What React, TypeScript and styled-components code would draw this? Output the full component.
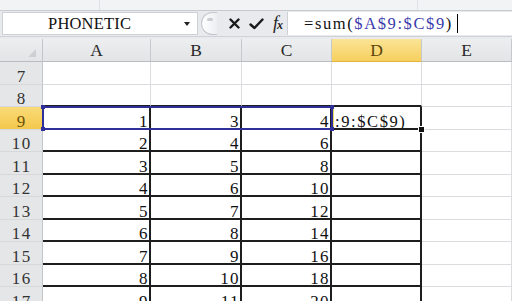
import React from 'react';
import styled, { createGlobalStyle, css } from 'styled-components';

const Global = createGlobalStyle`
  html, body { margin: 0; padding: 0; background: #fff; }
  body { width: 512px; height: 301px; overflow: hidden; font-family: "Liberation Serif", "Noto Sans CJK SC", serif; }
`;

const Window = styled.div`
  width: 512px;
  height: 301px;
  overflow: hidden;
  display: flex;
  flex-direction: column;
  background: #e8eaed;
`;

const TopStrip = styled.div`
  height: 10px;
  background: #f2f3f5;
  border-bottom: 1px solid #c7cacf;
  display: grid;
  grid-template-columns: 100px 318px 1fr;
`;

const StripPart = styled.div`
  border-right: 1px solid #dfe1e4;
`;

const FormulaBar = styled.div`
  height: 26px;
  display: flex;
  align-items: stretch;
  padding: 1px 0 1px 2px;
  box-sizing: border-box;
  background: #e8eaed;
  border-bottom: 1px solid #cfd2d6;
`;

const NameBox = styled.div`
  width: 196px;
  background: #fff;
  border: 1px solid #cdd0d4;
  box-sizing: border-box;
  display: flex;
  align-items: center;
  justify-content: space-between;
  padding: 0 7px 0 45px;
  font-size: 16.5px;
  letter-spacing: 0.2px;
  color: #111;
`;

const DropArrow = styled.span`
  width: 0;
  height: 0;
  border-left: 3.5px solid transparent;
  border-right: 3.5px solid transparent;
  border-top: 4px solid #222;
  margin-top: 1px;
`;

const Grip = styled.div`
  width: 15px;
  margin-left: 3px;
  border: 1px solid #c3c6ca;
  border-right: none;
  border-radius: 12px 0 0 12px;
  background: linear-gradient(90deg, #ffffff, #eceef1);
  display: flex;
  align-items: center;
  justify-content: center;
`;

const GripDot = styled.span`
  width: 6px;
  height: 3px;
  border-radius: 2px;
  background: #c9ccd0;
  margin-top: -8px;
`;

const Tools = styled.div`
  display: flex;
  align-items: center;
  gap: 9px;
  padding: 0 5px 0 12px;
`;

const Fx = styled.span`
  font-family: "Liberation Serif", serif;
  font-style: italic;
  font-size: 18px;
  color: #222;
  letter-spacing: -1px;
  small { font-size: 12px; font-weight: bold; }
`;

const FormulaInput = styled.div`
  flex: 1;
  background: #fff;
  border-left: 1px solid #cdd0d4;
  display: flex;
  align-items: center;
  padding-left: 16px;
  font-size: 16.5px;
  letter-spacing: 1.6px;
  color: #111;
  white-space: pre;
`;

const Ref = styled.span`
  color: #3a3aac;
`;

const Caret = styled.span`
  width: 1px;
  height: 19px;
  background: #000;
  margin-left: 4px;
`;

const Spacer = styled.div`
  height: 2px;
  background: #e8eaed;
`;

const Sheet = styled.div`
  position: relative;
  flex: 1;
  display: grid;
  grid-template-columns: 43px 108px 91px 90px 90px 90px;
  grid-template-rows: 23px repeat(11, 22.5px);
  background: #fff;
  overflow: hidden;
`;

const Corner = styled.div`
  background: linear-gradient(#eceef0, #e2e4e6);
  border-right: 1px solid #c3c5c8;
  border-bottom: 1px solid #b9bcc0;
  position: relative;
  &::after {
    content: "";
    position: absolute;
    right: 6px;
    bottom: 4px;
    border-left: 8px solid transparent;
    border-bottom: 8px solid #cdd0d3;
  }
`;

const ColHead = styled.div<{ $active?: boolean }>`
  display: flex;
  align-items: center;
  justify-content: center;
  font-size: 17.5px;
  color: #2a2a2a;
  background: linear-gradient(#eceef0, #e2e4e6);
  border-right: 1px solid #c6c8cb;
  border-bottom: 1px solid #b9bcc0;
  box-sizing: border-box;
  ${(p) =>
    p.$active &&
    css`
      background: linear-gradient(#fbe497, #f6cf5e);
      border-bottom-color: #e2b440;
      color: #5a4608;
    `}
`;

const RowHead = styled.div<{ $active?: boolean }>`
  display: flex;
  align-items: flex-end;
  justify-content: center;
  font-size: 17px;
  letter-spacing: 1.4px;
  text-indent: 1.4px;
  line-height: 10px;
  color: #333;
  background: #e4e6e8;
  border-right: 1px solid #c3c5c8;
  border-bottom: 1px solid #d6d8da;
  box-sizing: border-box;
  padding-bottom: 2px;
  ${(p) =>
    p.$active &&
    css`
      background: linear-gradient(#fadb78, #f4c84c);
      color: #6b5208;
    `}
`;

const Cell = styled.div<{ $darkRight?: boolean; $darkBottom?: boolean }>`
  display: flex;
  align-items: flex-end;
  justify-content: flex-end;
  font-size: 17px;
  letter-spacing: 1.4px;
  line-height: 10px;
  color: #111;
  box-sizing: border-box;
  padding: 0 0 1px 0;
  border-right: 1px solid #dadcdf;
  border-bottom: 1px solid #dadcdf;
  ${(p) =>
    p.$darkRight &&
    css`
      border-right: 2px solid #1e1e1e;
    `}
  ${(p) =>
    p.$darkBottom &&
    css`
      border-bottom: 2px solid #1e1e1e;
    `}
`;

const EditCell = styled(Cell)`
  justify-content: flex-start;
  padding-left: 3px;
  font-size: 16.5px;
  letter-spacing: 1.6px;
  box-shadow: inset 2px 0 0 #e6dc5a;
  overflow: hidden;
  white-space: pre;
`;

const RangeBox = styled.div`
  position: absolute;
  left: 42px;
  top: 67px;
  width: 291px;
  height: 24px;
  border: 2px solid #2f2f9c;
  box-sizing: border-box;
  pointer-events: none;
`;

const Knob = styled.span<{ $x: 'l' | 'r'; $y: 't' | 'b' }>`
  position: absolute;
  width: 4px;
  height: 4px;
  background: #2f2f9c;
  ${(p) => (p.$x === 'l' ? 'left: -3px;' : 'right: -3px;')}
  ${(p) => (p.$y === 't' ? 'top: -3px;' : 'bottom: -3px;')}
`;

const FillHandle = styled.div`
  position: absolute;
  left: 418px;
  top: 87px;
  width: 5px;
  height: 5px;
  background: #111;
  border: 1px solid #fff;
`;

const cols = ['A', 'B', 'C', 'D', 'E'];
const rows = [7, 8, 9, 10, 11, 12, 13, 14, 15, 16, 17];
const data: Record<number, number[]> = {
  9: [1, 3, 4],
  10: [2, 4, 6],
  11: [3, 5, 8],
  12: [4, 6, 10],
  13: [5, 7, 12],
  14: [6, 8, 14],
  15: [7, 9, 16],
  16: [8, 10, 18],
  17: [9, 11, 20],
};

const CrossIcon = () => (
  <svg width="11" height="11" viewBox="0 0 11 11">
    <path d="M1.5 1.5 L9.5 9.5 M9.5 1.5 L1.5 9.5" stroke="#1a1a1a" strokeWidth="2.4" strokeLinecap="round" />
  </svg>
);

const CheckIcon = () => (
  <svg width="15" height="12" viewBox="0 0 15 12">
    <path d="M1.5 6.5 L5.5 10 L13.5 1.5" stroke="#1a1a1a" strokeWidth="2.4" fill="none" strokeLinecap="round" strokeLinejoin="round" />
  </svg>
);

export default function App() {
  return (
    <Window>
      <Global />
      <TopStrip>
        <StripPart />
        <StripPart />
        <div />
      </TopStrip>
      <FormulaBar>
        <NameBox>
          <span>PHONETIC</span>
          <DropArrow />
        </NameBox>
        <Grip>
          <GripDot />
        </Grip>
        <Tools>
          <CrossIcon />
          <CheckIcon />
          <Fx>
            f<small>x</small>
          </Fx>
        </Tools>
        <FormulaInput>
          {'=sum('}
          <Ref>$A$9:$C$9</Ref>
          {')'}
          <Caret />
        </FormulaInput>
      </FormulaBar>
      <Spacer />
      <Sheet>
        <Corner />
        {cols.map((c) => (
          <ColHead key={c} $active={c === 'D'}>
            {c}
          </ColHead>
        ))}
        {rows.map((r) => {
          const inTable = r >= 9;
          const vals = data[r];
          return (
            <React.Fragment key={r}>
              <RowHead $active={r === 9}>{r}</RowHead>
              {[0, 1, 2].map((i) => (
                <Cell key={i} $darkRight={inTable} $darkBottom={r >= 8}>
                  {vals ? vals[i] : ''}
                </Cell>
              ))}
              {r === 9 ? (
                <EditCell $darkRight $darkBottom>
                  {':9:$C$9)'}
                </EditCell>
              ) : (
                <Cell $darkRight={inTable} $darkBottom={r >= 8} />
              )}
              <Cell />
            </React.Fragment>
          );
        })}
        <RangeBox>
          <Knob $x="l" $y="t" />
          <Knob $x="l" $y="b" />
          <Knob $x="r" $y="t" />
          <Knob $x="r" $y="b" />
        </RangeBox>
        <FillHandle />
      </Sheet>
    </Window>
  );
}
